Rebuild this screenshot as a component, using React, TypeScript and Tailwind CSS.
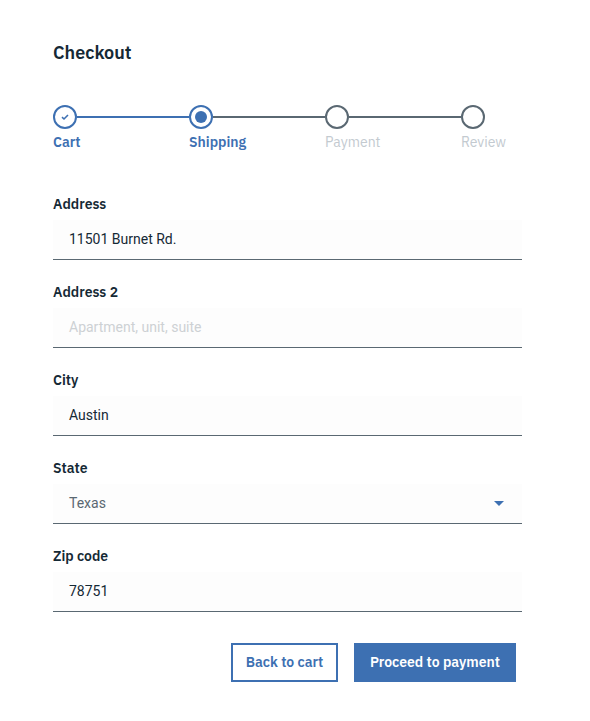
import React from "react";

const font = { fontFamily: '"IBM Plex Sans", "Open Sans", "Noto Sans", sans-serif' };

function Field({ label, value, placeholder, select }: { label: string; value?: string; placeholder?: string; select?: boolean }) {
  return (
    <div className="flex flex-col">
      <div className="text-[14px] leading-[18px] font-semibold text-[#152935]" style={font}>{label}</div>
      <div className="mt-[7px] h-[40px] bg-[#fdfdfd] border-b border-[#5a6872] flex items-center pl-[16px] pr-[16px] justify-between" style={{ fontFamily: 'Roboto, "Liberation Sans", sans-serif' }}>
        {value ? (
          <span className={select ? "text-[14px] text-[#5a6872]" : "text-[14px] text-[#152935]"}>{value}</span>
        ) : (
          <span className="text-[14px] text-[#cdd1d4]">{placeholder}</span>
        )}
        {select && (
          <svg width="10" height="5" viewBox="0 0 10 5" className="mr-[2px]">
            <path d="M0 0 L10 0 L5 5 Z" fill="#3d70b2" />
          </svg>
        )}
      </div>
    </div>
  );
}

export default function App() {
  return (
    <div className="w-[590px] h-[721px] bg-white pl-[53px] pt-[41px] overflow-hidden" style={font}>
      <h1 className="text-[18px] leading-[24px] font-semibold text-[#152935]">Checkout</h1>

      <div className="mt-[40px] flex w-[544px]">
        {/* step 1 */}
        <div className="w-[136px] shrink-0 flex flex-col">
          <div className="flex items-center">
            <div className="w-[24px] h-[24px] rounded-full border-2 border-[#3d70b2] flex items-center justify-center shrink-0">
              <svg width="10" height="8" viewBox="0 0 10 8"><path d="M2 4.2 L4 6 L8 2" fill="none" stroke="#3d70b2" strokeWidth="1.6" /></svg>
            </div>
            <div className="h-[2px] flex-1 bg-[#3d70b2]" />
          </div>
          <div className="mt-[5px] text-[14px] leading-[16px] font-semibold text-[#3d70b2]">Cart</div>
        </div>
        {/* step 2 */}
        <div className="w-[136px] shrink-0 flex flex-col">
          <div className="flex items-center">
            <div className="w-[24px] h-[24px] rounded-full border-2 border-[#3d70b2] flex items-center justify-center shrink-0">
              <div className="w-[12px] h-[12px] rounded-full bg-[#3d70b2]" />
            </div>
            <div className="h-[2px] flex-1 bg-[#5a6872]" />
          </div>
          <div className="mt-[5px] text-[14px] leading-[16px] font-semibold text-[#3d70b2]">Shipping</div>
        </div>
        {/* step 3 */}
        <div className="w-[136px] shrink-0 flex flex-col">
          <div className="flex items-center">
            <div className="w-[24px] h-[24px] rounded-full border-2 border-[#5a6872] shrink-0" />
            <div className="h-[2px] flex-1 bg-[#5a6872]" />
          </div>
          <div className="mt-[5px] text-[14px] leading-[16px] text-[#c3cad0]">Payment</div>
        </div>
        {/* step 4 */}
        <div className="w-[136px] shrink-0 flex flex-col">
          <div className="flex items-center">
            <div className="w-[24px] h-[24px] rounded-full border-2 border-[#5a6872] shrink-0" />
          </div>
          <div className="mt-[5px] text-[14px] leading-[16px] text-[#c3cad0]">Review</div>
        </div>
      </div>

      <div className="mt-[45px] w-[469px] flex flex-col gap-[23px]">
        <Field label="Address" value="11501 Burnet Rd." />
        <Field label="Address 2" placeholder="Apartment, unit, suite" />
        <Field label="City" value="Austin" />
        <Field label="State" value="Texas" select />
        <Field label="Zip code" value="78751" />
      </div>

      <div className="mt-[31px] w-[463px] flex justify-end gap-[16px]">
        <button className="w-[107px] h-[39px] border-2 border-[#3d70b2] bg-white text-[#3d70b2] text-[14px] font-semibold" style={font}>Back to cart</button>
        <button className="w-[162px] h-[39px] border-2 border-[#3d70b2] bg-[#3d70b2] text-white text-[14px] font-semibold" style={font}>Proceed to payment</button>
      </div>
    </div>
  );
}
